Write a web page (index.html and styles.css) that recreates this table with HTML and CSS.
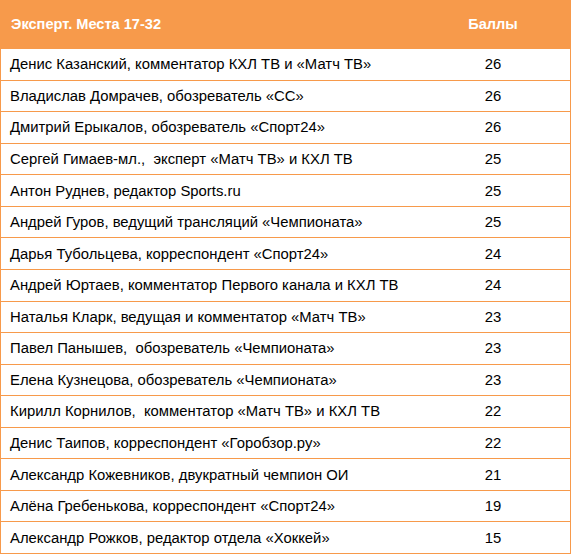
FILE: index.html
```html
<!DOCTYPE html>
<html lang="ru">
<head>
<meta charset="utf-8">
<link rel="stylesheet" href="styles.css">
</head>
<body>
<div class="table">
  <div class="head">
    <div class="c-name">Эксперт. Места 17-32</div>
    <div class="c-score">Баллы</div>
  </div>
  <div class="row"><div class="c-name">Денис Казанский, комментатор КХЛ ТВ и «Матч ТВ»</div><div class="c-score">26</div></div>
  <div class="row"><div class="c-name">Владислав Домрачев, обозреватель «СС»</div><div class="c-score">26</div></div>
  <div class="row"><div class="c-name">Дмитрий Ерыкалов, обозреватель «Спорт24»</div><div class="c-score">26</div></div>
  <div class="row"><div class="c-name">Сергей Гимаев-мл.,&nbsp; эксперт «Матч ТВ» и КХЛ ТВ</div><div class="c-score">25</div></div>
  <div class="row"><div class="c-name">Антон Руднев, редактор Sports.ru</div><div class="c-score">25</div></div>
  <div class="row"><div class="c-name">Андрей Гуров, ведущий трансляций «Чемпионата»</div><div class="c-score">25</div></div>
  <div class="row"><div class="c-name">Дарья Тубольцева, корреспондент «Спорт24»</div><div class="c-score">24</div></div>
  <div class="row"><div class="c-name">Андрей Юртаев, комментатор Первого канала и КХЛ ТВ</div><div class="c-score">24</div></div>
  <div class="row"><div class="c-name">Наталья Кларк, ведущая и комментатор «Матч ТВ»</div><div class="c-score">23</div></div>
  <div class="row"><div class="c-name">Павел Панышев,&nbsp; обозреватель «Чемпионата»</div><div class="c-score">23</div></div>
  <div class="row"><div class="c-name">Елена Кузнецова, обозреватель «Чемпионата»</div><div class="c-score">23</div></div>
  <div class="row"><div class="c-name">Кирилл Корнилов,&nbsp; комментатор «Матч ТВ» и КХЛ ТВ</div><div class="c-score">22</div></div>
  <div class="row"><div class="c-name">Денис Таипов, корреспондент «Горобзор.ру»</div><div class="c-score">22</div></div>
  <div class="row"><div class="c-name">Александр Кожевников, двукратный чемпион ОИ</div><div class="c-score">21</div></div>
  <div class="row"><div class="c-name">Алёна Гребенькова, корреспондент «Спорт24»</div><div class="c-score">19</div></div>
  <div class="row"><div class="c-name">Александр Рожков, редактор отдела «Хоккей»</div><div class="c-score">15</div></div>
</div>
</body>
</html>
```
FILE: styles.css
```css
html, body {
  margin: 0;
  padding: 0;
  background: #ffffff;
}
body {
  font-family: "Liberation Sans", Arial, sans-serif;
  font-size: 14.85px;
  color: #000000;
}
.table {
  width: 571px;
  box-sizing: border-box;
  border: 1px solid #f79a4b;
  border-top: none;
  display: grid;
  grid-template-rows: 48px repeat(16, 31.5625px);
}
.head, .row {
  display: grid;
  grid-template-columns: 415px 1fr;
  align-items: center;
}
.head {
  background: #f79a4b;
  color: #ffffff;
  font-weight: bold;
  font-size: 14.6px;
}
.head .c-name {
  padding-left: 10px;
}
.row {
  border-top: 1px solid #f79a4b;
}
.c-name {
  padding-left: 9px;
  white-space: nowrap;
}
.c-score {
  text-align: center;
}
```
